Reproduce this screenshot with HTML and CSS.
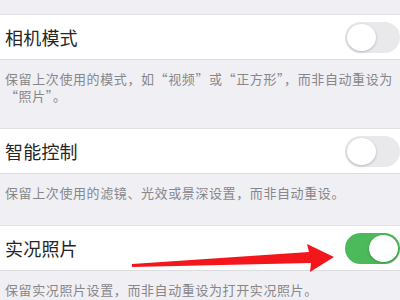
FILE: index.html
```html
<!DOCTYPE html>
<html lang="zh-CN">

<head>
  <meta charset="UTF-8">
  <meta name="viewport" content="width=device-width, initial-scale=1.0">
  <title>保留设置</title>
  <link rel="stylesheet" href="styles.css">
</head>

<body>
  <div id="container">
    <div class="group">
      <div class="row">
        <span class="row__title">相机模式</span>
        <span class="switch"><span class="switch__knob"></span></span>
      </div>
      <p class="desc">保留上次使用的模式，如“视频”或“正方形”，而非自动重设为“照片”。</p>
    </div>

    <div class="group">
      <div class="row">
        <span class="row__title">智能控制</span>
        <span class="switch"><span class="switch__knob"></span></span>
      </div>
      <p class="desc">保留上次使用的滤镜、光效或景深设置，而非自动重设。</p>
    </div>

    <div class="group">
      <div class="row">
        <span class="row__title">实况照片</span>
        <span class="switch switch--on"><span class="switch__knob"></span></span>
      </div>
      <p class="desc">保留实况照片设置，而非自动重设为打开实况照片。</p>
    </div>

    <!-- 红色箭头 -->
    <svg class="arrow" width="400" height="300" viewBox="0 0 400 300">
      <polygon points="132,264 309,252 307,244 334,257 310,272 311,263 132,267" fill="#f3161b" />
    </svg>
  </div>
</body>

</html>
```

FILE: styles.css
```css
* {
  box-sizing: border-box;
}

body {
  margin: 0;
  background: #efeff4;
  font-family: "Noto Sans CJK SC", "Noto Sans", sans-serif;
}

#container {
  position: relative;
  width: 400px;
  height: 300px;
  padding-top: 14px;
  overflow: hidden;
}

.row {
  display: flex;
  align-items: center;
  justify-content: space-between;
  height: 46px;
  padding-left: 5px;
  background: #fff;
  border-top: 1px solid #e2e2e6;
  border-bottom: 1px solid #dcdce0;
}

.row__title {
  font-size: 18px;
  color: #262626;
  letter-spacing: 0.2px;
}

.desc {
  margin: 0;
  padding: 10px 0 24px 5px;
  font-size: 13px;
  line-height: 17px;
  letter-spacing: 0.6px;
  color: #87878b;
}

.switch {
  display: flex;
  align-items: center;
  width: 55px;
  height: 31px;
  padding: 2px;
  border-radius: 16px;
  background: #e9e9ec;
}

.switch__knob {
  width: 29px;
  height: 27px;
  border-radius: 50%;
  background: #fff;
  box-shadow: 0 1px 3px rgba(0, 0, 0, 0.22);
}

.switch--on {
  justify-content: flex-end;
  background: #4cb95a;
}

.arrow {
  position: absolute;
  left: 0;
  top: 0;
  pointer-events: none;
}
```
